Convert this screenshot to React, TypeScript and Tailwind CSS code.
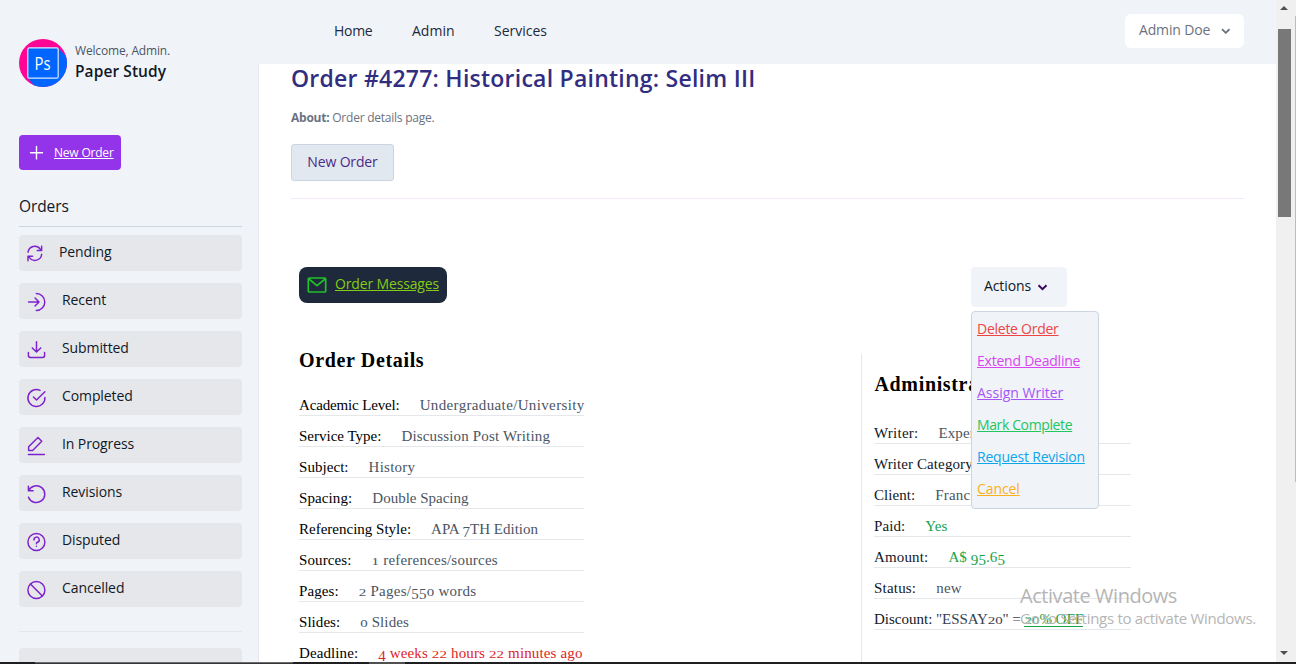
import React from "react";

const sans = "font-['Open_Sans','Noto_Sans',sans-serif]";

function Icon({ children, className = "size-5" }: { children: React.ReactNode; className?: string }) {
  return (
    <svg viewBox="0 0 20 20" className={`${className} shrink-0`} fill="none" stroke="currentColor" strokeWidth="1.4" strokeLinecap="round" strokeLinejoin="round">
      {children}
    </svg>
  );
}

const menu = [
  { label: "Pending", gap: "gap-3", icon: <path d="M1.9 8.7A6.5 6.5 0 0 1 13.6 5.9L14.7 7.1M14.9 3V7.2H10.7M14.9 10.7A6.5 6.5 0 0 1 3.2 13.9L2.1 12.7M1.9 17V12.6H6.2" /> },
  { label: "Recent", gap: "gap-[15px]", icon: <path d="M2.4 10H12.4M8.6 6.2L12.4 10L8.6 13.8M9.8 1.9A8.1 8.1 0 0 1 9.8 18.1" /> },
  { label: "Submitted", gap: "gap-[15px]", icon: <path d="M10 2.2V11.8M6 8L10 12L14 8M2.3 12.3V15.3A1.8 1.8 0 0 0 4.1 17.1H15.9A1.8 1.8 0 0 0 17.7 15.3V12.3" /> },
  { label: "Completed", gap: "gap-[15px]", icon: <path d="M18 9.4A8.1 8.1 0 1 1 13.4 2.7M7.1 9L10 11.9L18 4" /> },
  { label: "In Progress", gap: "gap-[15px]", icon: <path d="M2.3 18H17.5M2.5 14.2V10.8L11.4 1.9L15 5.5L6.3 14.2Z" /> },
  { label: "Revisions", gap: "gap-[15px]", icon: <path d="M2.3 2.5V7H6.8M2.6 6.8A8 8 0 1 1 2.4 13" /> },
  { label: "Disputed", gap: "gap-[15px]", icon: <><circle cx="9.9" cy="10" r="8.1" /><path d="M7.6 8.1A2.5 2.5 0 1 1 10.9 10.2Q9.9 10.6 9.9 11.6M9.9 14V14.1" /></> },
  { label: "Cancelled", gap: "gap-[15px]", icon: <><circle cx="9.9" cy="10" r="8.1" /><path d="M4.2 4.3L15.6 15.7" /></> },
];

type RowData = { label: string; value: string; lt: string; vt: string; color: string };

const details: RowData[] = [
  { label: "Academic Level:", value: "Undergraduate/University", lt: "tracking-[-0.15px]", vt: "tracking-[0.36px]", color: "text-[#4b5563]" },
  { label: "Service Type:", value: "Discussion Post Writing", lt: "tracking-[0px]", vt: "tracking-[0.16px]", color: "text-[#4b5563]" },
  { label: "Subject:", value: "History", lt: "tracking-[0.05px]", vt: "tracking-[0.25px]", color: "text-[#4b5563]" },
  { label: "Spacing:", value: "Double Spacing", lt: "tracking-[0.1px]", vt: "tracking-[0px]", color: "text-[#4b5563]" },
  { label: "Referencing Style:", value: "APA 7TH Edition", lt: "tracking-[0px]", vt: "tracking-[0px]", color: "text-[#4b5563]" },
  { label: "Sources:", value: "1 references/sources", lt: "tracking-[0.1px]", vt: "tracking-[0.22px]", color: "text-[#4b5563]" },
  { label: "Pages:", value: "2 Pages/550 words", lt: "tracking-[0.1px]", vt: "tracking-[0.25px]", color: "text-[#4b5563]" },
  { label: "Slides:", value: "0 Slides", lt: "tracking-[0.05px]", vt: "tracking-[0.1px]", color: "text-[#4b5563]" },
  { label: "Deadline:", value: "4 weeks 22 hours 22 minutes ago", lt: "tracking-[0.1px]", vt: "tracking-[0.14px]", color: "text-[#dc2626]" },
];

const admin: RowData[] = [
  { label: "Writer:", value: "Expert", lt: "tracking-[0.25px]", vt: "tracking-[0.1px]", color: "text-[#4b5563]" },
  { label: "Writer Category:", value: "", lt: "tracking-[0.1px]", vt: "", color: "" },
  { label: "Client:", value: "Franc", lt: "tracking-[0.05px]", vt: "tracking-[0.2px]", color: "text-[#4b5563]" },
  { label: "Paid:", value: "Yes", lt: "tracking-[0.1px]", vt: "tracking-[0.1px]", color: "text-[#16a34a]" },
  { label: "Amount:", value: "A$ 95.65", lt: "tracking-[0.15px]", vt: "tracking-[0.1px]", color: "text-[#16a34a]" },
  { label: "Status:", value: "new", lt: "tracking-[0.2px]", vt: "tracking-[0.2px]", color: "text-[#4b5563]" },
];

const actions = [
  { label: "Delete Order", cls: "text-[#ef4444] tracking-[-0.26px]" },
  { label: "Extend Deadline", cls: "text-[#d946ef] tracking-[-0.23px]" },
  { label: "Assign Writer", cls: "text-[#a855f7] tracking-[0px]" },
  { label: "Mark Complete", cls: "text-[#22c55e] tracking-[-0.38px]" },
  { label: "Request Revision", cls: "text-[#0ea5e9] tracking-[-0.2px]" },
  { label: "Cancel", cls: "text-[#fbb020] tracking-[-0.1px]" },
];

/* Text figures: 0-2 sit at x-height, 3-5, 7 and 9 hang below the baseline. */
function OldStyle({ text }: { text: string }) {
  return (
    <>
      {text.split(/(\d)/).map((part, i) => {
        if (/^[012]$/.test(part)) return <span key={i} className="inline-block origin-[50%_80%] scale-y-[0.7]">{part}</span>;
        if (/^[34579]$/.test(part)) return <span key={i} className="inline-block translate-y-[2.5px]">{part}</span>;
        return part;
      })}
    </>
  );
}

function Row({ row }: { row: RowData }) {
  return (
    <div className="mb-2 flex h-[23px] items-start gap-5 border-b border-[#e5e7eb] pt-0.5 text-[15px] leading-5 whitespace-nowrap">
      <span className={row.lt}>{row.label}</span>
      <span className={`${row.vt} ${row.color} whitespace-pre`}><OldStyle text={row.value} /></span>
    </div>
  );
}

function Sidebar() {
  return (
    <aside className="flex w-[259px] shrink-0 flex-col bg-[#f0f4f9]">
      <div className="h-16 shrink-0 px-[19px] pt-[39px]">
        <div className="flex gap-2">
          <svg viewBox="0 0 48 48" className="size-12 shrink-0">
            <defs><clipPath id="avatar"><circle cx="24" cy="24" r="24" /></clipPath></defs>
            <g clipPath="url(#avatar)">
              <rect width="48" height="48" fill="#ff0596" />
              <path d="M39 9L48 18V48H16L9 39Z" fill="#0066ff" />
              <rect x="8.8" y="8.8" width="30.4" height="30.4" rx="1.5" fill="#0066ff" stroke="#d7e8ff" strokeWidth="1.2" />
            </g>
            <text x="15.5" y="31" fontSize="18.5" fill="#fff" fontFamily="'Open Sans', sans-serif" textLength="16" lengthAdjust="spacingAndGlyphs">Ps</text>
          </svg>
          <div className="whitespace-nowrap">
            <div className="mt-1 text-[12px] leading-4 tracking-[-0.16px] text-[#4b5563]">Welcome, Admin.</div>
            <div className="text-[15.5px] leading-6 font-semibold tracking-[0.08px] text-[#111827]">Paper Study</div>
          </div>
        </div>
      </div>
      <div className="flex min-h-0 grow flex-col overflow-hidden border-r border-[#e5e7eb] pr-4 pl-[19px]">
        <a className="mt-[71px] flex h-[35px] w-[102px] shrink-0 items-center gap-2 rounded bg-[#9333ea] pl-2 text-[12px] tracking-[-0.2px] whitespace-nowrap text-white">
          <Icon><path d="M3.5 9.7H15.5M9.5 3.5V15.9" /></Icon>
          <span className="-ml-px underline">New Order</span>
        </a>
        <h2 className="mt-6 h-[33px] shrink-0 border-b border-[#cbd5e1] text-[15.5px] leading-6 tracking-[-0.1px] text-[#111827]">Orders</h2>
        <nav className="mt-2 flex shrink-0 flex-col gap-3">
          {menu.map((m) => (
            <a key={m.label} className={`flex h-9 items-center rounded bg-[#e5e7eb] pl-[7px] text-[14px] text-[#111827] ${m.gap}`}>
              <Icon className={m.label === "Pending" ? "size-[21px] text-[#7e22ce]" : "size-[21px] translate-y-[0.5px] text-[#7e22ce]"}>{m.icon}</Icon>
              <span className="-mt-[3px] tracking-[-0.1px]">{m.label}</span>
            </a>
          ))}
        </nav>
        <div className="mt-6 h-px shrink-0 bg-[#e5e7eb]" />
        <div className="mt-4 h-9 shrink-0 rounded bg-[#e5e7eb]" />
      </div>
    </aside>
  );
}

function Chevron({ className }: { className: string }) {
  return (
    <svg viewBox="0 0 10 7" className={className} fill="none" stroke="currentColor" strokeWidth="2">
      <path d="M1 1.2L5 5.2L9 1.2" />
    </svg>
  );
}

export default function App() {
  return (
    <div className={`${sans} relative flex h-[664px] w-[1296px] flex-col overflow-hidden bg-white`}>
      <div className="flex h-[662px] shrink-0 overflow-hidden">
        <Sidebar />
        <div className="flex min-w-0 grow flex-col">
          <header className="flex h-16 shrink-0 items-start bg-[#f0f4f9] pl-[75px] text-[14px] text-[#1e293b]">
            <nav className="flex grow leading-5">
              <a className="mt-[21px] w-[78px] tracking-[-0.3px]">Home</a>
              <a className="mt-[21px] w-[82px]">Admin</a>
              <a className="mt-[21px]">Services</a>
            </nav>
            <button className="mt-3.5 mr-8 flex h-[34px] w-[119px] items-center justify-between rounded-md bg-white pr-[14px] pl-[14px] text-[#6b7280]">
              <span className="-mt-[3px] tracking-[-0.15px]">Admin Doe</span>
              <Chevron className="h-[6.5px] w-[9.5px]" />
            </button>
          </header>
          <main className="flex min-h-0 grow flex-col pr-8 pl-8">
            <h1 className="shrink-0 text-[23px] leading-7 font-semibold tracking-[0.24px] whitespace-nowrap text-[#312e81]">Order #4277: Historical Painting: Selim III</h1>
            <p className="mt-[18px] shrink-0 text-[12px] leading-4 tracking-[-0.24px] text-[#6b7280]"><b>About:</b> Order details page.</p>
            <div className="mt-[18px] flex h-[37px] w-[103px] shrink-0 items-center justify-center rounded-[3px] border border-[#cbd5e1] bg-[#e2e8f0] text-[14px] tracking-[-0.15px] text-[#4c2a85]"><span className="-mt-0.5">New Order</span></div>
            <div className="mt-[17px] h-px shrink-0 bg-[#f3e8ff]" />
            <div className="mt-[68px] flex h-[87px] shrink-0 items-start justify-between pl-2">
              <a className="flex h-9 w-[148px] items-center gap-2 rounded-lg bg-[#1e293b] pl-2 text-[14px] font-medium tracking-[-0.15px] whitespace-nowrap text-[#84cc16]">
                <svg viewBox="0 0 20 16" className="h-4 w-5 shrink-0 text-[#22c02a]" fill="none" stroke="currentColor" strokeWidth="1.7" strokeLinejoin="round"><rect x="1.3" y="1" width="17.4" height="14" rx="1" /><path d="M2 2L10 8.6L18 2" /></svg>
                <span className="-mt-[3px] underline">Order Messages</span>
              </a>
              <div className="relative mr-[177px]">
                <button className="flex h-10 w-24 items-center gap-1.5 rounded bg-[#f0f4f9] pl-[13px] text-[14px] tracking-[-0.1px] text-[#111827]">
                  <span className="-mt-[3px]">Actions</span> <Chevron className="h-[7px] w-[11px] text-[#3b0764]" />
                </button>
                <div className="absolute top-11 left-0 z-10 flex h-[198px] w-32 flex-col rounded border border-[#cbd5e1] bg-[#f0f4f9] pt-[1px] pl-[5px] text-[14px] whitespace-nowrap">
                  {actions.map((a) => <a key={a.label} className={`h-8 shrink-0 leading-8 underline ${a.cls}`}>{a.label}</a>)}
                </div>
              </div>
            </div>
            <div className="flex min-h-0 grow font-['Liberation_Serif',serif]">
              <section className="w-[570px] shrink-0 pr-[277px] pl-2 text-black">
                <h3 className="-mt-2 mb-[19px] text-[20px] leading-7 font-bold tracking-[0.65px]">Order Details</h3>
                <div className="w-[285px]">{details.map((r) => <Row key={r.label} row={r} />)}</div>
              </section>
              <section className="grow border-l border-[#e5e7eb] pl-3 text-[#111827]">
                <h3 className="mt-4 mb-[23px] ml-[0.5px] text-[20px] leading-7 font-bold tracking-[0.65px] text-black">Administration</h3>
                <div className="w-[257px]">
                  {admin.map((r) => <Row key={r.label} row={r} />)}
                  <div className="h-[23px] border-b border-[#e5e7eb] pt-0.5 text-[15px] leading-5 whitespace-nowrap">
                    Discount: <span className="tracking-[-0.1px] text-[#374151]">"ESSAY<OldStyle text="20" />" =</span> <span className="inline-block h-[18px] border-b border-[#16a34a] align-top text-[#16a34a]"><OldStyle text="20% OFF" /></span>
                  </div>
                </div>
              </section>
            </div>
          </main>
        </div>
        <div className="flex w-5 shrink-0 flex-col items-center bg-[#f0f0f0] pr-1">
          <svg viewBox="0 0 8 4" className="mt-1.5 h-1 w-2"><path d="M4 0L8 4H0Z" fill="#505050" /></svg>
          <div className="mt-[19px] h-[188px] w-[13px] bg-[#787878]" />
          <svg viewBox="0 0 8 4" className="mt-auto mb-[7px] h-1 w-2"><path d="M0 0H8L4 4Z" fill="#505050" /></svg>
        </div>
      </div>
      <div className="flex h-0.5 shrink-0 bg-[#1f1f21]">
        <div className="ml-[35px] w-[258px] border-t border-[#6b6b6b] bg-[#353537]" />
        <div className="ml-[76px] w-9 bg-[#505052]" />
      </div>
      <div className="absolute top-4 right-0 h-[466px] w-px bg-[#bdbdbd]" />
      <div className="pointer-events-none absolute top-[583px] left-[1020px] z-20 whitespace-nowrap text-[#b5b5b5]">
        <div className="text-[20px] leading-[26px] tracking-[-0.45px]">Activate Windows</div>
        <div className="text-[15px] leading-[19px] tracking-[-0.28px]">Go to Settings to activate Windows.</div>
      </div>
    </div>
  );
}
